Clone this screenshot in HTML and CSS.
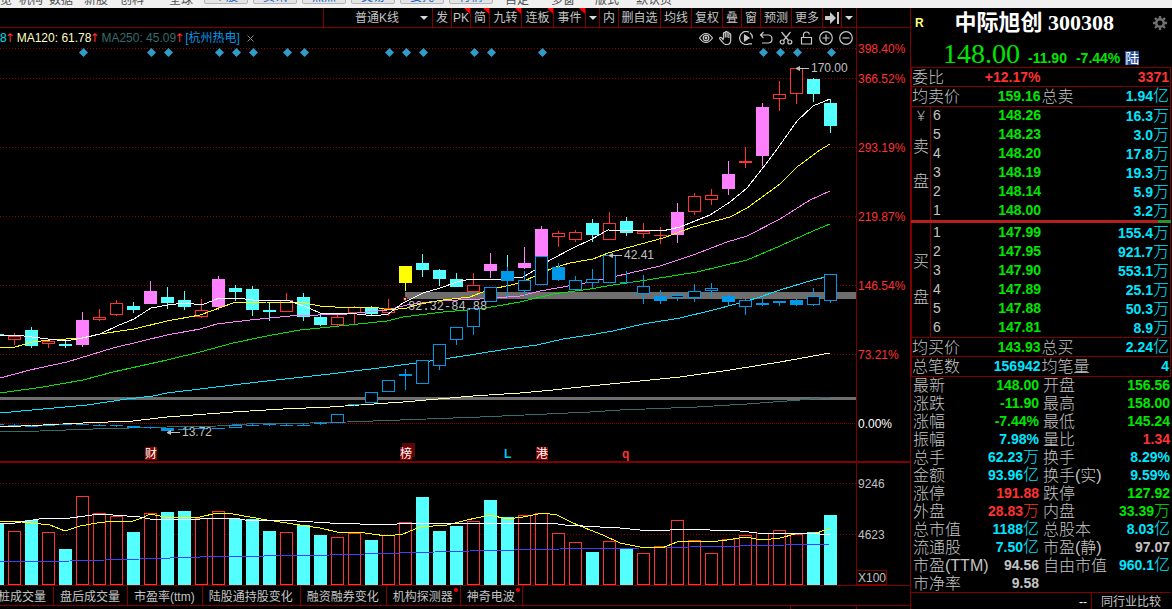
FILE: index.html
```html
<!DOCTYPE html>
<html lang="zh-CN">
<head>
<meta charset="utf-8">
<title>中际旭创 300308</title>
<link rel="stylesheet" href="styles.css">
</head>
<body>
<nav class="strip">
  <a>览</a><a>机构</a><a>数据</a><a>新股</a><a>创科</a><a>全球</a>
  <button>个股</button><button>资讯</button><button>热点</button><button>交易</button><button>委托</button><button>行情</button>
  <a>自定</a><a>多窗</a><a>版式</a><a>默认页</a>
</nav>
<main class="app">
  <section class="left">
    <div class="toolbar">
      <button class="wide"><span>普通K线</span><i class="caret"></i></button>
      <button class="one">发</button><button class="one hot">PK</button><button class="one hot">简</button>
      <button class="two hot">九转</button><button class="two hot">连板</button><button class="two hot">事件</button>
      <button class="drop" aria-label="事件菜单"><i class="caret"></i></button>
      <button class="one">内</button><button class="three">删自选</button><button class="two">均线</button><button class="two">复权</button>
      <button class="one">叠</button><button class="one">窗</button><button class="two">预测</button><button class="two">更多</button>
      <button class="one" aria-label="最右"><svg width="14" height="12" viewBox="0 0 14 12"><path d="M0 4h5V0l6 6-6 6V8H0zM12 0h2v12h-2z" fill="#c8c8c8"/></svg></button>
      <button class="drop" aria-label="菜单"><i class="caret"></i></button>
    </div>
    <div class="info">
      <span class="ma5">8<b>↑</b></span><span class="ma120">MA120: 61.78<b>↑</b></span><span class="ma250">MA250: 45.09<b>↑</b></span><span class="peer">[杭州热电]</span><button class="close" aria-label="关闭"><svg width="7" height="7" viewBox="0 0 7 7"><path d="M.5.5l6 6M6.5.5l-6 6" stroke="#888"/></svg></button>
      <div class="tools">
        <button aria-label="显示"><svg viewBox="0 0 14 14"><path d="M.5 7Q3.500 2.500 7 2.500T13.500 7Q10.500 11.500 7 11.500T.5 7z"/><circle cx="7" cy="7" r="2.800"/><circle cx="7" cy="7" r=".8"/></svg></button>
        <button aria-label="拖动"><svg viewBox="0 0 14 14"><path d="M4.500 8V2.500q0-1 .9-1t.9 1V6.500V1.500q0-1 .9-1t.9 1V6.500V2q0-1 .9-1t.9 1V7V3.500q0-1 .9-1t.9 1V9q0 4.500-4 4.500H7Q5 13.500 3.500 11L.8 7.800q-.5-1 .4-1.300t1.500.4L4.500 9"/></svg></button>
        <button aria-label="回放"><svg viewBox="0 0 14 14"><path d="M10 1.200A6.500 6.500 0 1 0 10 12.800M11 1.800A6.300 6.300 0 0 1 13.300 7.500M10 12.800h3"/><path d="M5.500 4l4.500 3-4.500 3z" fill="#c8c8c8"/></svg></button>
        <button aria-label="撤销"><svg viewBox="0 0 14 14"><path d="M4.500 1L1.500 4l3 3M1.500 4H9q4 0 4 4t-4 4H3"/></svg></button>
        <button aria-label="剪切"><svg viewBox="0 0 14 14"><path d="M2.500 1l7 8.500M11.500 1l-7 8.500"/><circle cx="3.200" cy="11" r="2"/><circle cx="10.800" cy="11" r="2"/></svg></button>
        <button aria-label="锁定"><svg viewBox="0 0 14 14"><path d="M2.500 6.500h10v6.500h-10zM4.500 6.500V4Q4.500 1 7.500 1T10 3.500"/></svg></button>
        <button aria-label="放大"><svg viewBox="0 0 14 14"><circle cx="7" cy="7" r="6.300"/><path d="M3.500 7h7M7 3.500v7"/></svg></button>
        <button aria-label="缩小"><svg viewBox="0 0 14 14"><circle cx="7" cy="7" r="6.300"/><path d="M3.500 7h7"/></svg></button>
      </div>
    </div>
    <svg class="chart" id="price" viewBox="0 48 910 415"></svg>
    <svg class="chart" id="volume" viewBox="0 463 910 122"></svg>
    <div class="tabs">
      <button class="cut">桩成交量</button><button>盘后成交量</button><button>市盈率(ttm)</button><button>陆股通持股变化</button><button>融资融券变化</button><button class="dot">机构探测器</button><button class="dot">神奇电波</button>
    </div>
    <div class="under"><i></i><i></i></div>
  </section>

  <aside class="panel">
    <header class="head">
      <div class="title"><span class="flag">R</span><h1>中际旭创 300308</h1>
        <button class="gear" aria-label="设置"><svg width="14" height="14" viewBox="0 0 14 14"><circle cx="7" cy="7" r="3.800" fill="none" stroke="#707070" stroke-width="2.600"/><path d="M7 0v2.500M7 11.500V14M0 7h2.500M11.500 7H14M2 2l2 2M10 10l2 2M12 2l-2 2M4 10l-2 2" stroke="#707070" stroke-width="2.400"/></svg></button></div>
      <div class="quote"><strong>148.00</strong><b>-11.90</b><b>-7.44%</b><span class="lu">陆</span></div>
    </header>
    <table class="pairs boxed">
      <tr><th>委比</th><td class="r">+12.17%</td><th></th><td class="r">3371</td></tr>
      <tr><th>均卖价</th><td class="g">159.16</td><th>总卖</th><td class="c">1.94<i>亿</i></td></tr>
    </table>
    <div class="book">
      <div class="side sell"><span>￥</span><span>卖</span><span>盘</span></div>
      <table>
        <tr><th>6</th><td class="g">148.26</td><td class="c">16.3<i>万</i></td></tr>
        <tr><th>5</th><td class="g">148.23</td><td class="c">3.0<i>万</i></td></tr>
        <tr><th>4</th><td class="g">148.20</td><td class="c">17.8<i>万</i></td></tr>
        <tr><th>3</th><td class="g">148.19</td><td class="c">19.3<i>万</i></td></tr>
        <tr><th>2</th><td class="g">148.14</td><td class="c">5.9<i>万</i></td></tr>
        <tr><th>1</th><td class="g">148.00</td><td class="c">3.2<i>万</i></td></tr>
      </table>
    </div>
    <div class="ratio"><i></i></div>
    <div class="book">
      <div class="side buy"><span>买</span><span>盘</span></div>
      <table>
        <tr><th>1</th><td class="g">147.99</td><td class="c">155.4<i>万</i></td></tr>
        <tr><th>2</th><td class="g">147.95</td><td class="c">921.7<i>万</i></td></tr>
        <tr><th>3</th><td class="g">147.90</td><td class="c">553.1<i>万</i></td></tr>
        <tr><th>4</th><td class="g">147.89</td><td class="c">25.1<i>万</i></td></tr>
        <tr><th>5</th><td class="g">147.88</td><td class="c">50.3<i>万</i></td></tr>
        <tr><th>6</th><td class="g">147.81</td><td class="c">8.9<i>万</i></td></tr>
      </table>
    </div>
    <table class="pairs boxed">
      <tr><th>均买价</th><td class="g">143.93</td><th>总买</th><td class="c">2.24<i>亿</i></td></tr>
      <tr><th>总笔数</th><td class="c">156942</td><th>均笔量</th><td class="c">4</td></tr>
    </table>
    <table class="pairs stats">
      <tr><th>最新</th><td class="g">148.00</td><th>开盘</th><td class="g">156.56</td></tr>
      <tr><th>涨跌</th><td class="g">-11.90</td><th>最高</th><td class="g">158.00</td></tr>
      <tr><th>涨幅</th><td class="g">-7.44%</td><th>最低</th><td class="g">145.24</td></tr>
      <tr><th>振幅</th><td class="c">7.98%</td><th>量比</th><td class="r">1.34</td></tr>
      <tr><th>总手</th><td class="c">62.23<i>万</i></td><th>换手</th><td class="c">8.29%</td></tr>
      <tr><th>金额</th><td class="c">93.96<i>亿</i></td><th>换手(实)</th><td class="c">9.59%</td></tr>
      <tr><th>涨停</th><td class="r">191.88</td><th>跌停</th><td class="g">127.92</td></tr>
      <tr><th>外盘</th><td class="r">28.83<i>万</i></td><th>内盘</th><td class="g">33.39<i>万</i></td></tr>
      <tr><th>总市值</th><td class="c">1188<i>亿</i></td><th>总股本</th><td class="c">8.03<i>亿</i></td></tr>
      <tr><th>流通股</th><td class="c">7.50<i>亿</i></td><th>市盈(静)</th><td>97.07</td></tr>
      <tr><th>市盈(TTM)</th><td>94.56</td><th>自由市值</th><td class="c">960.1<i>亿</i></td></tr>
      <tr><th>市净率</th><td>9.58</td><th></th><td></td></tr>
    </table>
    <div class="foot"><span>--</span><a href="#peers">同行业比较</a></div>
  </aside>
</main>
<script src="chart.js"></script>
</body>
</html>
```
FILE: styles.css
```css
* { box-sizing: border-box; }
:root {
  --line: #800000;
  --grey: #c4c4c4;
  --ui: "Liberation Sans", "Noto Sans CJK SC", sans-serif;
}
body {
  margin: 0;
  background: #000;
  color: var(--grey);
  font: 12px/18px var(--ui);
}
button {
  padding: 0;
  border: 0;
  background: none;
  color: inherit;
  font: inherit;
  white-space: nowrap;
}
i { font-style: normal; }
table { border-collapse: collapse; table-layout: fixed; width: 100%; }
th, td { padding: 0; white-space: nowrap; }

.strip {
  display: grid;
  grid-template-columns: 19px 30px 35px 36px 49px 35px repeat(5, 49px) 56px 46px 44px 41px 60px;
  grid-template-rows: 8px;
  align-items: end;
  height: 8px;
  overflow: hidden;
  background: #f0f0f0;
  color: #505050;
}
.strip a { line-height: 16px; }
.strip button {
  width: 44px;
  height: 20px;
  margin-bottom: 4px;
  padding-top: 6px;
  border: 1px solid #b4b4b4;
  border-radius: 2px;
  background: #e4e4e4;
  color: #1464c8;
  line-height: 12px;
}

.app { display: flex; }
.left { flex: 1; min-width: 0; }

.toolbar {
  display: flex;
  justify-content: flex-end;
  height: 20px;
  padding-right: 53px;
  border-bottom: 1px solid var(--line);
}
.toolbar button {
  position: relative;
  border-left: 1px solid var(--line);
}
.toolbar button:last-child { width: 16px; border-right: 1px solid var(--line); }
.toolbar svg { vertical-align: middle; }
.toolbar .wide { display: flex; align-items: center; width: 109px; padding: 0 4px 0 31px; justify-content: space-between; }
.one { width: 19px; }
.two { width: 31px; }
.two.hot { width: 32px; }
.three { width: 42px; }
.drop { width: 14px; }
.caret {
  display: inline-block;
  border: 4px solid transparent;
  border-top-color: #d8d8d8;
  border-bottom: 0;
  vertical-align: middle;
}
.hot::after {
  content: "";
  position: absolute;
  top: 0;
  right: 0;
  border: 3px solid #f00;
  border-left-color: transparent;
  border-bottom-color: transparent;
}

.info { display: flex; align-items: center; height: 20px; padding-right: 57px; }
.info b {
  display: inline-block;
  width: 6px;
  color: #ff3232;
  font: 400 12px/18px "DejaVu Sans", sans-serif;
  text-indent: -2px;
}
.ma5 { margin-right: 4px; color: #00e0f0; }
.ma120 { margin-right: 4px; color: #ffffc0; }
.ma250 { margin-right: 3px; color: #366c6c; }
.peer { color: #0098e8; }
.close { margin-left: 7px; line-height: 7px; }
.tools { display: flex; gap: 6px; margin-left: auto; }
.tools button { width: 14px; height: 14px; }
.tools svg { display: block; fill: none; stroke: #c8c8c8; stroke-width: 1.2; }

.chart { display: block; width: 100%; overflow: visible; font: 12px var(--ui); }
.axis { fill: #ff3232; }
.num { fill: #c0c0c0; }

.tabs {
  display: flex;
  height: 21px;
  overflow: hidden;
  border-top: 1px solid var(--line);
  border-bottom: 1px solid var(--line);
}
.tabs button { position: relative; padding: 2px 7px 0 6px; border-right: 1px solid var(--line); }
.tabs .cut { margin-left: -8px; }
.dot::after {
  content: "";
  position: absolute;
  top: 2px;
  right: 2px;
  width: 4px;
  height: 4px;
  border-radius: 2px;
  background: #f00;
}
.under { display: flex; justify-content: flex-end; height: 3px; padding-right: 53px; }
.under i { width: 66px; border-left: 1px solid var(--line); }
.under i:last-child { width: 1px; }

.panel { width: 262px; padding-right: 1px; border-left: 1px solid var(--line); }
.head { height: 59px; padding-right: 4px; }
.title { display: flex; align-items: center; height: 29px; padding-left: 4px; }
.flag { color: #ffff80; font-weight: 700; }
.title h1 {
  flex: 1;
  margin: 0;
  padding-right: 8px;
  color: #fff;
  text-align: center;
  font: 700 22px/28px "Liberation Serif", "Noto Sans CJK SC", serif;
}
.gear { height: 14px; line-height: 14px; }
.quote {
  display: flex;
  align-items: baseline;
  padding: 4px 0 0 32px;
  color: #00e600;
  font-size: 14px;
  line-height: 26px;
}
.quote strong { width: 85px; font: 400 28px/26px "Liberation Serif", serif; }
.quote b { margin-right: 9px; }
.lu {
  width: 14px;
  margin-left: -4px;
  background: #2850a0;
  color: #fff;
  font-size: 14px;
  line-height: 14px;
}

.boxed { border: 1px solid var(--line); border-bottom: 0; }
.boxed tr + tr { border-top: 1px solid var(--line); }
.panel tr { height: 19px; }
.panel th {
  text-align: left;
  font: 300 16px/17px var(--ui);
}
.panel td { text-align: right; font-size: 14px; font-weight: 700; line-height: 17px; }
.panel td i { font-size: 16px; font-weight: 300; }
.pairs th:nth-child(1) { width: 60px; }
.pairs td:nth-child(2) { width: 70px; padding-right: 1px; }
.pairs th:nth-child(3) { width: 60px; }
.pairs td:last-child { padding-right: 1px; }
.g { color: #00e600; }
.r { color: #ff3232; }
.c { color: #00e6ff; }

.book {
  display: flex;
  border-left: 1px solid var(--line);
  border-right: 1px solid var(--line);
}
.side {
  display: flex;
  flex-direction: column;
  align-items: center;
  width: 19px;
  border-right: 1px solid var(--line);
  font-size: 16px;
  font-weight: 300;
}
.sell { border-top: 1px solid var(--line); gap: 17px; }
.sell + table { border-top: 1px solid var(--line); }
.sell span:first-child { font-size: 13px; margin-bottom: -4px; }
.buy { gap: 18px; padding-top: 30px; }
.book table { flex: 1; }
.panel .book th { width: 20px; padding-left: 2px; font-size: 14px; font-weight: 400; }
.book td:nth-child(2) { width: 90px; }
.book td:last-child { padding-right: 1px; }
.ratio { height: 3px; background: #b42020; }
.ratio i { display: block; width: 5%; height: 100%; margin-left: auto; background: #309028; }

.panel .stats { border-top: 1px solid var(--line); }
.panel .stats tr { height: 18px; }
.panel .stats td:nth-child(2) { padding-right: 2px; }
.panel .stats th { padding-left: 2px; }
.foot {
  display: flex;
  justify-content: flex-end;
  height: 17px;
  overflow: hidden;
  border-top: 1px solid var(--line);
  color: #fff;
  line-height: 19px;
}
.foot a {
  width: 80px;
  margin-left: 4px;
  padding-left: 9px;
  border-left: 1px solid var(--line);
  color: var(--grey);
  text-decoration: none;
}
```
FILE: chart.js
```js
const NS = 'http://www.w3.org/2000/svg';
const COLORS = { r: '#ff3232', c: '#54ffff', m: '#ff80ff', y: '#ffff00', b: '#0098e8', B: '#0098e8' };
const STEP = 17, LEFT = 8, BODY = 13;

function add(parent, tag, attrs, text) {
  const el = document.createElementNS(NS, tag);
  for (const k in attrs) el.setAttribute(k, attrs[k]);
  if (text) el.textContent = text;
  parent.appendChild(el);
  return el;
}
const box = (p, x, y, w, h, fill) => add(p, 'rect', { x, y, width: w, height: h, fill, 'shape-rendering': 'crispEdges' });
const label = (p, x, y, text, attrs) => add(p, 'text', Object.assign({ x, y, class: 'num' }, attrs), text);
const line = (p, points, stroke) => add(p, 'polyline', { points, stroke, fill: 'none', 'shape-rendering': 'crispEdges' });
function grid(p, y, dash) {
  add(p, 'path', { d: `M0 ${y + 0.5}H856`, stroke: '#900000', 'stroke-dasharray': dash || '1 2', 'shape-rendering': 'crispEdges' });
}

// Each candle: index, kind, body top, body bottom, high, low.
function candle(p, [i, kind, top, bottom, high, low]) {
  const x = LEFT + i * STEP, col = COLORS[kind];
  if (high < top) box(p, x + 6, high, 1, top - high, col);
  if (low > bottom) box(p, x + 6, bottom, 1, low - bottom, col);
  if ((kind === 'r' || kind === 'b') && bottom - top > 2) {
    add(p, 'rect', { x: x + 0.5, y: top + 0.5, width: BODY - 1, height: bottom - top - 1, fill: '#000', stroke: col, 'shape-rendering': 'crispEdges' });
  } else box(p, x, top, BODY, bottom - top, col);
}

const main = [
  [-1,'c',334,336,334,336],[0,'r',336,340,333,345],[1,'c',330,346,327,348],[2,'r',341,344,339,348],[3,'c',344,346,341,348],
  [4,'m',320,345,312,347],[5,'r',317,320,309,321],[6,'r',303,315,300,316],[7,'c',306,310,302,313],[8,'m',291,304,281,304],
  [9,'c',297,303,287,309],[10,'c',300,307,291,310],[11,'r',310,317,299,318],[12,'m',279,307,276,310],[13,'c',288,292,285,301],
  [14,'c',289,310,286,316],[15,'c',310,312,303,321],[16,'r',300,312,293,312],[17,'c',297,317,293,321],[18,'c',317,325,314,326],
  [19,'r',317,325,314,326],[20,'r',307,313,306,324],[21,'c',308,314,306,316],[22,'r',308,313,299,316],[23,'y',266,283,266,291],
  [24,'c',263,270,254,277],[25,'c',270,279,269,286],[26,'c',279,287,273,287],[27,'r',285,292,273,292],[28,'m',264,271,253,278],
  [29,'c',271,281,255,281],[30,'m',263,268,247,269],[31,'m',229,256,226,256],[32,'r',233,237,231,247],[33,'r',232,240,230,242],
  [34,'c',223,235,219,242],[35,'r',223,240,212,240],[36,'c',221,233,217,236],[37,'r',231,234,223,238],[38,'r',235,236,227,244],
  [39,'m',212,235,203,243],[40,'r',196,212,193,215],[41,'r',195,200,189,205],[42,'m',174,189,161,195],[43,'r',161,163,147,168],
  [44,'m',107,156,103,166],[45,'r',94,99,81,111],[46,'r',68,94,68,104],[47,'c',79,94,78,102],[48,'c',103,126,99,133]
];
const peer = [
  [-1,'B',424,425,424,425],[0,'B',425,426,424,426],[1,'B',426,427,425,427],[2,'B',425,426,425,426],[3,'B',424,425,424,425],
  [4,'B',424,425,424,425],[5,'B',425,426,424,426],[6,'B',425,426,425,427],[7,'B',426,428,426,428],[8,'B',427,428,427,429],
  [9,'B',428,431,428,431],[10,'B',429,430,429,430],[11,'B',428,429,428,429],[12,'B',428,429,428,429],[13,'b',425,428,424,428],
  [14,'B',425,426,423,426],[15,'B',424,425,423,426],[16,'B',425,426,424,426],[17,'B',425,426,424,426],[18,'B',423,424,422,425],
  [19,'b',414,423,414,423],[20,'B',404,405,404,406],[21,'b',392,403,392,403],[22,'b',380,392,380,392],[23,'B',374,376,369,390],
  [24,'b',360,384,360,384],[25,'b',344,366,344,370],[26,'b',327,340,327,345],[27,'b',308,327,308,335],[28,'b',287,302,287,302],
  [29,'B',271,281,267,298],[30,'b',280,291,271,295],[31,'b',256,285,256,285],[32,'B',267,280,263,281],[33,'b',280,290,276,290],
  [34,'b',279,283,269,288],[35,'b',255,283,255,283],[36,'B',282,283,271,283],[37,'b',286,294,275,304],[38,'B',296,301,290,304],
  [39,'b',295,298,294,301],[40,'b',291,298,284,302],[41,'b',288,291,283,297],[42,'B',296,302,294,305],[43,'b',300,307,299,315],
  [44,'B',303,305,298,306],[45,'B',301,303,301,306],[46,'B',300,305,299,306],[47,'b',296,305,288,306],[48,'b',274,301,274,303]
];

const price = document.getElementById('price');
[48, 78, 147, 216, 285, 354].forEach(y => grid(price, y));
grid(price, 423, '1 1');
box(price, 405, 292, 451, 7, '#6e6e6e');
box(price, 0, 397, 856, 3, '#6e6e6e');
main.forEach(c => candle(price, c));
line(price, '0,432 40,431 93,429 167,427 217,426 247,424 310,423 347,422 400,420 480,417 547,414 590,412 620,410 697,407 747,404 800,400 830,397', '#366c6c');
line(price, '0,427 43,425 83,423 133,421 167,417 233,412 283,409 330,407 403,402 473,396 520,393 553,390 590,386 630,382 680,377 730,370 780,362 830,353', '#ffffb0');
line(price, '0,413 43,409 87,405 127,399 153,396 167,393 200,389 233,385 267,381 330,374 387,367 423,362 470,355 507,349 537,345 563,339 590,335 613,331 643,324 680,318 713,310 740,303 757,298 780,290 813,280 830,276', '#00e6ff');
line(price, '0,393 43,387 83,380 113,372 167,360 200,352 233,343 267,336 300,330 330,327 387,321 403,317 443,312 480,309 520,302 553,294 590,289 613,285 647,280 697,272 747,260 780,246 813,231 830,224', '#00e600');
line(price, '0,378 30,370 67,362 113,348 167,335 200,329 217,324 250,320 290,316 347,314 387,310 407,305 437,301 480,299 520,296 540,291 563,287 590,282 613,277 660,266 693,255 727,242 747,236 780,219 810,200 830,191', '#ff80ff');
line(price, '0,348 15,347 33,342 50,340 83,338 100,334 134,329 167,321 200,315 233,303 267,302 300,302 320,306 335,307 373,307 390,310 407,308 420,304 443,300 470,297 480,293 497,288 520,283 537,275 553,268 570,263 593,259 608,253 630,247 663,238 693,227 730,217 747,208 780,184 797,167 820,150 830,144', '#ffff00');
line(price, '0,336 15,335 32,337 48,339 66,341 82,338 100,334 117,326 134,319 151,308 168,305 185,303 202,305 219,298 236,298 253,300 270,301 287,300 304,306 320,313 357,314 375,316 388,314 403,303 423,293 440,288 457,282 470,279 505,279 523,277 535,270 550,260 573,248 590,240 608,230 662,231 680,227 710,215 730,202 747,188 769,160 780,145 797,121 813,106 830,99', '#ffffff');
peer.forEach(c => candle(price, c));
[4, 8, 9, 12, 13, 14, 16, 17, 22, 23, 24, 27, 28, 31, 44, 45, 46, 48].forEach(i => {
  const x = LEFT + i * STEP + 7.5;
  add(price, 'path', { d: `M${x - 4.5} 52.5l4.500-4.500 4.500 4.500-4.500 4.500z`, fill: '#309cc8' });
});
function arrow(x, y, text) {
  add(price, 'path', { d: `M${x} ${y}h13M${x + 4} ${y - 2}l-4 2 4 2`, stroke: '#c0c0c0', fill: '#c0c0c0' });
  label(price, x + 15, y + 3.5, text);
}
arrow(796, 68.5, '170.00');
arrow(609, 255.5, '42.41');
arrow(167, 432.5, '13.72');
label(price, 408, 310, '82.32-84.88', { 'font-family': 'Liberation Mono, monospace' });
box(price, 403, 297, 4, 4, '#800000');
box(price, 404, 298, 2, 2, '#c0c0c0');
box(price, 402, 443, 13, 14, '#580808');
[[145, '财'], [400, '榜'], [536, '港']].forEach(([x, t]) => {
  box(price, x, 447, 12, 13, '#800000');
  label(price, x, 458, t, { style: 'fill:#fff' });
});
label(price, 504, 458, 'L', { style: 'fill:#00c8e6;font-weight:700' });
label(price, 622, 458, 'q', { style: 'fill:#ff3232;font-weight:700' });
box(price, 0, 461, 910, 2, '#800000');
box(price, 856, 28, 1, 435, '#800000');
[['398.40%', 53], ['366.52%', 83], ['293.19%', 152], ['219.87%', 221], ['146.54%', 290], ['73.21%', 359]]
  .forEach(([t, y]) => label(price, 858, y, t, { class: 'axis' }));
label(price, 858, 428, '0.00%', { style: 'fill:#fff' });

// Volume bars: kind and top edge, starting at index -1.
const volume = document.getElementById('volume');
const bars = 'c523 r531 c520 r532 c549 r496 r513 r516 c532 r513 c512 c511 r518 r511 c519 c519 c531 r532 c525 c535 r537 r533 c540 r535 r522 c497 c531 c526 r521 c500 c517 r515 r513 r533 r542 c552 r541 c549 r553 r546 r520 r540 r553 r539 r535 r533 r530 r534 c532 c515'.split(' ');
grid(volume, 483);
grid(volume, 534);
bars.forEach((b, n) => {
  const top = +b.slice(1);
  candle(volume, [n - 1, b[0], top, 585, top, 585]);
});
line(volume, '0,562 70,561 140,559 200,557 330,555 400,553 470,551 560,549 640,548 740,546 830,544', '#4040ff');
line(volume, '0,521 22,522 50,525 65,531 80,526 97,523 113,521 133,521 142,518 150,514 165,517 200,517 217,513 233,514 250,517 267,520 300,525 320,528 337,532 357,532 387,536 403,534 420,527 447,525 467,520 490,515 507,519 523,517 543,513 557,515 573,523 590,530 603,535 620,543 640,547 662,548 677,542 695,541 710,542 727,540 745,537 762,540 780,538 795,534 815,533 830,529', '#ffff00');
line(volume, '0,524 15,523 45,518 70,518 100,514 140,517 150,519 200,519 217,518 235,518 245,520 280,520 330,523 360,524 397,524 403,523 550,523 565,525 600,527 620,528 640,530 670,530 680,529 740,531 757,533 820,534 830,535', '#ffffff');
box(volume, 856, 463, 1, 122, '#800000');
add(volume, 'rect', { x: 856.5, y: 570.5, width: 30, height: 14, fill: 'none', stroke: '#800000', 'shape-rendering': 'crispEdges' });
label(volume, 858, 488, '9246');
label(volume, 858, 539, '4623');
label(volume, 858, 582, 'X100');
```
